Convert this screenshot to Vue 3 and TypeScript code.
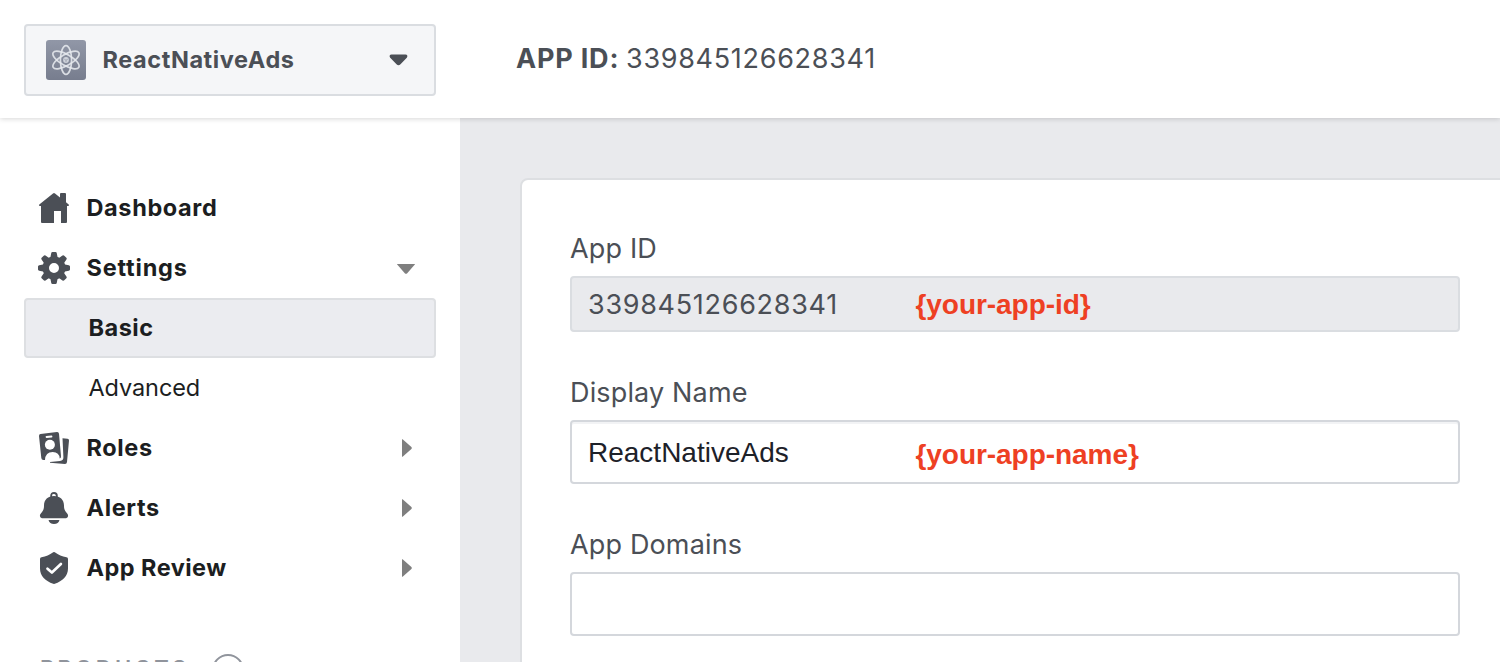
<script setup lang="ts">
interface NavItem {
  key: string
  label: string
  arrow?: 'down' | 'right'
  children?: { label: string; active: boolean }[]
}

const appName = 'ReactNativeAds'
const appId = '339845126628341'

const nav: NavItem[] = [
  { key: 'dashboard', label: 'Dashboard' },
  {
    key: 'settings',
    label: 'Settings',
    arrow: 'down',
    children: [
      { label: 'Basic', active: true },
      { label: 'Advanced', active: false },
    ],
  },
  { key: 'roles', label: 'Roles', arrow: 'right' },
  { key: 'alerts', label: 'Alerts', arrow: 'right' },
  { key: 'review', label: 'App Review', arrow: 'right' },
]

const gearTeeth = [0, 45, 90, 135, 180, 225, 270, 315]
</script>

<template>
  <div class="page">
    <header class="topbar">
      <div class="picker">
        <svg class="logo" viewBox="0 0 40 40">
          <defs>
            <linearGradient id="tile" x1="0" y1="0" x2="0" y2="1">
              <stop offset="0" stop-color="#9197a7" />
              <stop offset="1" stop-color="#777d8e" />
            </linearGradient>
          </defs>
          <rect width="40" height="40" rx="3" fill="url(#tile)" />
          <g fill="none" stroke="#e6e9ee" stroke-width="1.7" stroke-opacity="0.88">
            <ellipse cx="20" cy="20" rx="5.6" ry="14.4" />
            <ellipse cx="20" cy="20" rx="5.6" ry="14.8" transform="rotate(60 20 20)" />
            <ellipse cx="20" cy="20" rx="5.6" ry="14.8" transform="rotate(120 20 20)" />
          </g>
          <circle cx="20" cy="20" r="2.9" fill="#cfd3db" />
          <path d="M18.3 19.2 20 20.2l1.8-1M20 20.2v2" fill="none" stroke="#9298a6" stroke-width=".7" />
        </svg>
        <span class="picker-name">{{ appName }}</span>
        <svg class="picker-arrow" viewBox="0 0 18 12">
          <path d="M2 .5h14c1.800 0 2.500 1.800 1.300 3.200L11 10.200c-1.300 1.400-2.700 1.400-4 0L.7 3.700C-.5 2.300.2.500 2 .5z" fill="#4b4f56" />
        </svg>
      </div>
      <div class="appid"><b>APP ID:</b><span>{{ appId }}</span></div>
    </header>

    <div class="body">
      <aside class="sidebar">
        <template v-for="item in nav" :key="item.key">
          <div class="row">
            <svg class="icon" viewBox="0 0 32 32" fill="#4b4f56">
              <path
                v-if="item.key === 'dashboard'"
                d="M15 1.400q1-.8 2 0l5 4.100V2q0-1 1-1h4q1 0 1 1v8.300l2.700 2.200q.8.800-.3 1.500H29v16q0 1-1 1h-5V19h-7v12H4q-1 0-1-1V14H1.600Q.4 13.300 1.300 12.500z"
              />
              <g v-else-if="item.key === 'settings'">
                <path
                  v-for="angle in gearTeeth"
                  :key="angle"
                  :transform="`rotate(${angle} 16 16)`"
                  d="M12 7.500 13.200 1.200Q13.400 0 14.500 0h3q1.100 0 1.300 1.200L20 7.500z"
                />
                <path fill-rule="evenodd" d="M16 4.500a11.500 11.500 0 1 0 0 23 11.500 11.500 0 0 0 0-23zm0 6.500a5 5 0 1 1 0 10 5 5 0 0 1 0-10z" />
              </g>
              <g v-else-if="item.key === 'roles'">
                <path d="M2.500 2 19 .1q1.800-.1 2 1.600l2 22.600q.1 1.700-1.300 2.200-.3-6.500-7-6.500-7.300 0-7.700 8H5.500q-2 0-2.200-2L1 4Q1 2.200 2.500 2z" />
                <circle cx="11.900" cy="12.800" r="5" fill="#fff" />
                <path d="M8.500 5 13.500 4.500" stroke="#fff" stroke-width="1.800" stroke-linecap="round" />
                <path d="M24.500 6.200l5 .5q1.600.2 1.500 1.700L29 30q-.2 2-2 2L12 30.700v-.6l10-1.100q3.700-.6 3.400-4z" />
              </g>
              <g v-else-if="item.key === 'alerts'">
                <path d="M13.200 5V3.700Q13.200 1 16 1t2.800 2.700V5" fill="none" stroke="#4b4f56" stroke-width="1.900" />
                <path d="M16 3.900c6 0 10 3.700 10 9.600 0 4.100 1 5.500 3 7.700 1 1.200 1.200 2 1 3-.3 1.400-1.500 2-3 2H5c-1.500 0-2.700-.6-3-2-.2-1 0-1.800 1-3 2-2.200 3-3.600 3-7.700 0-5.900 4-9.600 10-9.600z" />
                <path d="M10.500 28h11q-1 4-5.500 4t-5.500-4z" />
              </g>
              <g v-else>
                <path d="M15.200.3q.8-.5 1.600 0C20.500 3 24 4.500 28.500 5.300q1.500.3 1.500 1.700v9.500C30 24.500 24.500 29 16.800 31.800q-.8.300-1.600 0C7.500 29 2 24.500 2 16.500V7q0-1.400 1.500-1.700C8 4.500 11.500 3 15.200.3z" />
                <path d="M9.500 16.700l4.400 3.800 9-8.500" fill="none" stroke="#fff" stroke-width="2.700" stroke-linecap="round" stroke-linejoin="round" />
              </g>
            </svg>
            <span class="label" :class="item.key">{{ item.label }}</span>
            <svg v-if="item.arrow === 'down'" class="arrow down" viewBox="0 0 18 10">
              <path d="M.5 0h17q.5 0 .3.500L10 9.400q-1 .8-2 0L.2.500Q0 0 .5 0z" fill="#7f7f7f" />
            </svg>
            <svg v-else-if="item.arrow === 'right'" class="arrow right" viewBox="0 0 10 18">
              <path d="M0 .5q0-.5.600-.3l8.800 7.900q.8.900 0 1.800l-8.800 7.900q-.6.200-.6-.3z" fill="#7f7f7f" />
            </svg>
          </div>
          <div v-for="child in item.children" :key="child.label" class="sub" :class="{ active: child.active }">
            {{ child.label }}
          </div>
        </template>
        <div class="products">
          <span>PRODUCTS</span>
          <svg class="plus" viewBox="0 0 32 32" fill="none" stroke="#90949c" stroke-width="2">
            <circle cx="16" cy="16" r="15" />
            <path d="M16 9v14M9 16h14" />
          </svg>
        </div>
      </aside>

      <main class="content">
        <section class="card">
          <div class="field">
            <div class="field-label">App ID</div>
            <div class="box readonly">
              <span class="value id">{{ appId }}</span><span class="note">{your-app-id}</span>
            </div>
          </div>
          <div class="field">
            <div class="field-label">Display Name</div>
            <div class="box input">
              <span class="value name">{{ appName }}</span><span class="note low">{your-app-name}</span>
            </div>
          </div>
          <div class="field">
            <div class="field-label">App Domains</div>
            <div class="box input plain"></div>
          </div>
        </section>
      </main>
    </div>
  </div>
</template>

<style>
body { margin: 0; overflow: hidden; }
</style>

<style scoped>
* { box-sizing: border-box; }
.page {
  width: 1500px;
  height: 662px;
  overflow: hidden;
  display: flex;
  flex-direction: column;
  background: #fff;
  font-family: Inter, "Liberation Sans", sans-serif;
  color: #1c1e21;
  white-space: nowrap;
}
.topbar {
  flex: none;
  height: 118px;
  display: flex;
  align-items: flex-start;
  padding: 24px 24px 0;
  background: #fff;
  box-shadow: 0 1px 5px rgba(0, 0, 0, 0.16);
  position: relative;
  z-index: 1;
}
.picker {
  width: 412px;
  height: 72px;
  display: flex;
  align-items: center;
  padding: 0 26px 0 20px;
  background: #f5f6f8;
  border: 2px solid #dadde1;
  border-radius: 4px;
}
.logo { width: 40px; height: 40px; flex: none; }
.picker-name {
  margin-left: 16.5px;
  padding-bottom: 2px;
  flex: 1;
  font-size: 23.5px;
  font-weight: 700;
  color: #4b4f56;
  letter-spacing: 0.58px;
}
.picker-arrow { width: 19px; height: 12px; flex: none; margin-right: 0.5px; }
.appid {
  display: flex;
  margin-left: 80px;
  line-height: 70px;
  font-size: 27px;
  color: #4b4f56;
}
.appid b { width: 110px; font-weight: 700; letter-spacing: 0.8px; }
.appid span { letter-spacing: 0.7px; }
.body { flex: 1; display: flex; min-height: 0; }
.sidebar { width: 460px; flex: none; padding: 60px 24px 0; background: #fff; }
.row { height: 60px; display: flex; align-items: center; padding: 0 21px 0 14px; }
.icon { width: 32px; height: 32px; flex: none; }
.label { margin-left: 16.5px; padding-bottom: 2px; flex: 1; font-size: 23.5px; font-weight: 700; letter-spacing: 0.62px; }
.label.settings { letter-spacing: 0.8px; }
.label.review { letter-spacing: 0.45px; }
.arrow { flex: none; }
.down { width: 18px; height: 10px; margin-top: 1px; }
.right { width: 10px; height: 18px; margin-right: 3px; }
.sub {
  height: 60px;
  line-height: 56px;
  padding-left: 62.5px;
  border: 2px solid transparent;
  border-radius: 4px;
  font-size: 23.5px;
  letter-spacing: -0.1px;
}
.sub.active { background: #ebecf0; border-color: #dddfe2; font-weight: 700; letter-spacing: 0.5px; }
.products {
  display: flex;
  align-items: flex-start;
  height: 32px;
  margin: 56px 0 0 16px;
  color: #90949c;
  font-size: 22px;
  line-height: 28px;
  font-weight: 600;
  letter-spacing: 3.4px;
}
.products span { width: 172px; }
.plus { width: 32px; height: 32px; }
.content { flex: 1; min-width: 0; padding: 60px 0 0 60px; background: #e9eaed; }
.card {
  width: 1000px;
  height: 700px;
  padding: 48px;
  background: #fff;
  border: 2px solid #dddfe2;
  border-radius: 8px;
}
.field { width: 890px; margin-bottom: 40px; }
.field-label { height: 48px; line-height: 42px; font-size: 27px; letter-spacing: 0.15px; color: #4b4f56; }
.box {
  display: flex;
  align-items: center;
  border: 2px solid #d4d7dc;
  border-radius: 4px;
  padding-left: 16px;
}
.readonly { height: 56px; background: #e9eaed; border-color: #dadde1; }
.input { height: 64px; box-shadow: inset 0 2px 0 #f2f3f5; }
.plain { box-shadow: none; }
.value { width: 327.5px; font-size: 27px; letter-spacing: 0.7px; color: #4b4f56; }
.value.name {
  padding-top: 2px;
  font-family: "Liberation Sans", Arial, sans-serif;
  font-size: 28px;
  letter-spacing: 0;
  color: #1d2129;
}
.note {
  padding-top: 2px;
  font-family: "Liberation Sans", Arial, sans-serif;
  font-size: 28px;
  letter-spacing: -0.05px;
  font-weight: 700;
  color: #ee4023;
}
.note.low { padding-top: 5px; }
</style>
